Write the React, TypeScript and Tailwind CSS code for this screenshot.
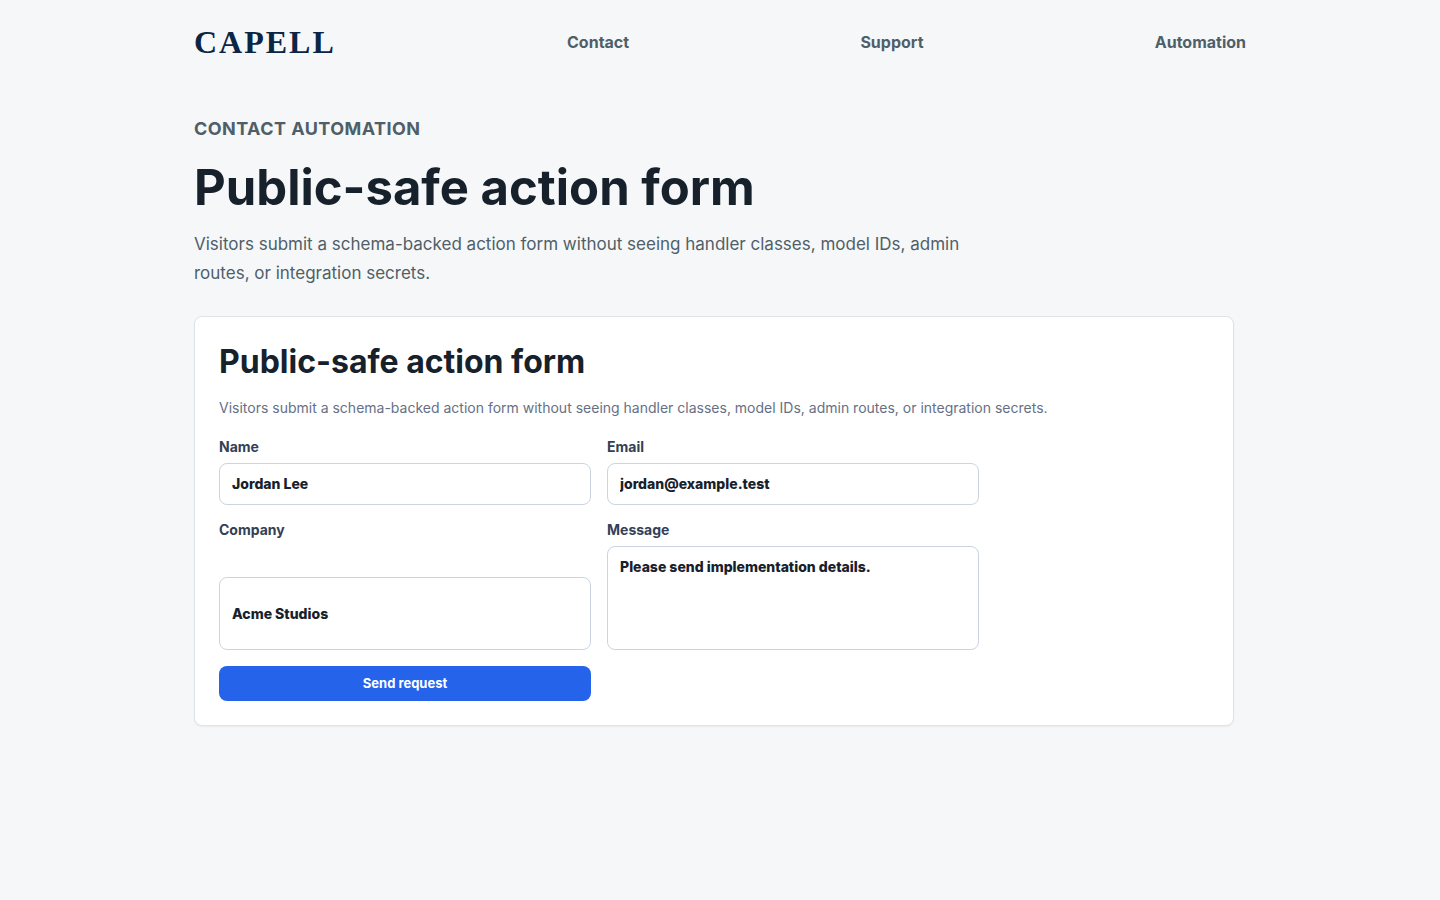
import React from 'react';

const links = ['Contact', 'Support', 'Automation'];

const inputStyle = 'w-full min-h-[42px] rounded-lg border border-[#cbd5e1] bg-white px-3 text-sm font-extrabold text-[#17212b]';

const Header: React.FC = () => (
  <header className="mx-auto flex h-21 max-w-[1052px] items-center justify-between">
    <a href="#home" className="font-['Liberation_Serif',serif] text-[32px] leading-10 font-bold tracking-[2px] text-[#0b2545]">
      CAPELL
    </a>
    {links.map((link) => (
      <a key={link} href={`#${link.toLowerCase()}`} className="text-base font-bold text-[#4f5f68]">
        {link}
      </a>
    ))}
  </header>
);

const ActionForm: React.FC = () => (
  <section className="mt-7 max-w-[1040px] rounded-lg border border-[#dfe3e8] bg-white p-6 shadow-xs">
    <h2 className="text-[32px] leading-[41px] font-bold text-[#17212b]">Public-safe action form</h2>
    <p className="mt-4 text-sm leading-5 text-[#667085]">
      Visitors submit a schema-backed action form without seeing handler classes, model IDs, admin routes, or integration secrets.
    </p>
    <form className="mt-5 grid max-w-[760px] grid-cols-2 gap-4 text-sm leading-[17px] font-bold text-[#344054]">
      <label className="grid gap-2">
        Name
        <input type="text" defaultValue="Jordan Lee" className={inputStyle} />
      </label>
      <label className="grid gap-2">
        Email
        <input type="email" defaultValue="jordan@example.test" className={inputStyle} />
      </label>
      <label className="grid gap-2">
        Company
        <input type="text" defaultValue="Acme Studios" className={inputStyle} />
      </label>
      <label className="grid gap-2">
        Message
        <textarea defaultValue="Please send implementation details." className={`${inputStyle} h-[104px] resize-none py-2.5`} />
      </label>
      <button type="submit" className="h-[35px] rounded-lg bg-[#2563eb] text-[13px] font-bold text-white">
        Send request
      </button>
    </form>
  </section>
);

const App: React.FC = () => {
  return (
    <div className="min-h-screen bg-[#f6f7f9] px-4 font-['Inter',sans-serif]">
      <Header />
      <main className="mx-auto max-w-[1052px] pt-8">
        <p className="text-lg leading-[26px] font-bold tracking-wide text-[#4f5f68] uppercase">Contact automation</p>
        <h1 className="mt-[18px] text-[49px] leading-14 font-bold text-[#17212b]">Public-safe action form</h1>
        <p className="mt-3.5 max-w-[780px] text-[17px] leading-[29px] text-[#4f5f68]">
          Visitors submit a schema-backed action form without seeing handler classes, model IDs, admin routes, or integration secrets.
        </p>
        <ActionForm />
      </main>
    </div>
  );
};

export default App;
